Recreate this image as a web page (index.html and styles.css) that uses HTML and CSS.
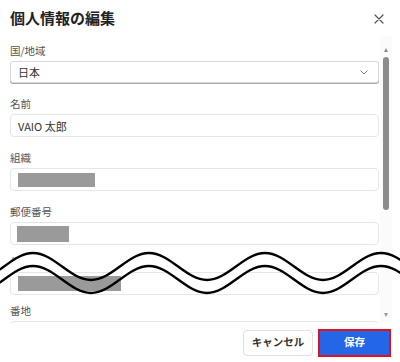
FILE: index.html
```html
<!DOCTYPE html>
<html lang="ja">
<head>
<meta charset="utf-8">
<title>個人情報の編集</title>
<link rel="stylesheet" href="styles.css">
</head>
<body>
<div class="dialog">
  <header class="head">
    <h1 class="title">個人情報の編集</h1>
    <button class="close" aria-label="閉じる">
      <svg width="10" height="10" viewBox="0 0 10 10"><path d="M1 1L9 9M9 1L1 9" stroke="#555" stroke-width="1.2" fill="none" stroke-linecap="round"/></svg>
    </button>
  </header>
  <div class="scroll">
    <div class="content">
      <div class="field">
        <div class="label">国/地域</div>
        <div class="box select"><span class="value">日本</span>
          <svg class="chev" width="8" height="5" viewBox="0 0 8 5"><path d="M0.5 0.5L4 4L7.5 0.5" stroke="#777" stroke-width="1" fill="none"/></svg>
        </div>
      </div>
      <div class="field">
        <div class="label">名前</div>
        <div class="box"><span class="value">VAIO 太郎</span></div>
      </div>
      <div class="field">
        <div class="label">組織</div>
        <div class="box"><span class="redact redact-org"></span></div>
      </div>
      <div class="field field-tight">
        <div class="label">郵便番号</div>
        <div class="box"><span class="redact redact-zip"></span></div>
      </div>
      <div class="field field-tighter">
        <div class="label">住所</div>
        <div class="box"><span class="redact redact-addr"></span></div>
      </div>
      <div class="field">
        <div class="label">番地</div>
        <div class="box"></div>
      </div>
    </div>
    <div class="scrollbar">
      <span class="arrow up"></span>
      <span class="thumb"></span>
      <span class="arrow down"></span>
    </div>
  </div>
  <footer class="foot">
    <button class="btn cancel">キャンセル</button>
    <button class="btn save">保存</button>
  </footer>
  <svg class="wave wave-fill" width="400" height="60" viewBox="0 240 400 60">
    <path d="M -83 259.5 C -61.92 259.5 -46.08 286.5 -25 286.5 S 11.92 259.5 33 259.5 S 70.08 286.5 91 286.5 S 127.92 259.5 149 259.5 S 186.08 286.5 207 286.5 S 243.92 259.5 265 259.5 S 302.08 286.5 323 286.5 S 359.92 259.5 381 259.5 S 418.08 286.5 439 286.5 S 475.92 259.5 497 259.5" fill="none" stroke="#fff" stroke-width="12.5"/>
  </svg>
  <svg class="wave wave-line" width="400" height="60" viewBox="0 240 400 60">
    <path d="M -83 253 C -61.92 253 -46.08 280 -25 280 S 11.92 253 33 253 S 70.08 280 91 280 S 127.92 253 149 253 S 186.08 280 207 280 S 243.92 253 265 253 S 302.08 280 323 280 S 359.92 253 381 253 S 418.08 280 439 280 S 475.92 253 497 253" fill="none" stroke="#000" stroke-width="2.4"/>
    <path d="M -83 266 C -61.92 266 -46.08 293 -25 293 S 11.92 266 33 266 S 70.08 293 91 293 S 127.92 266 149 266 S 186.08 293 207 293 S 243.92 266 265 266 S 302.08 293 323 293 S 359.92 266 381 266 S 418.08 293 439 293 S 475.92 266 497 266" fill="none" stroke="#000" stroke-width="2.4"/>
  </svg>
</div>
</body>
</html>
```
FILE: styles.css
```css
* { box-sizing: border-box; }
html, body { margin: 0; padding: 0; background: #fff; }
body {
  font-family: "Noto Sans CJK JP", "Noto Sans", sans-serif;
  color: #333;
}
.dialog {
  position: relative;
  width: 400px;
  height: 362px;
  display: flex;
  flex-direction: column;
  overflow: hidden;
}
.head {
  height: 36px;
  flex: none;
  display: flex;
  align-items: center;
  justify-content: space-between;
  padding: 0 16px 0 10px;
}
.title {
  margin: 0;
  font-size: 15px;
  font-weight: 700;
  color: #222;
  line-height: 20px;
}
.close {
  border: 0;
  background: none;
  padding: 0;
  margin-top: 2px;
  width: 10px;
  height: 10px;
  display: flex;
}
.scroll {
  flex: none;
  height: 287px;
  display: flex;
  overflow: hidden;
  padding: 0 8px 0 10px;
}
.content {
  flex: 1;
  padding-top: 8px;
  margin-right: 1px;
}
.field { margin-bottom: 14px; }
.field-tight { margin-bottom: 10px; }
.field-tighter { margin-bottom: 9px; }
.label {
  font-size: 10.5px;
  line-height: 14px;
  color: #555;
  margin-bottom: 3px;
}
.box {
  height: 23px;
  border: 1px solid #e6e6e6;
  border-radius: 4px;
  display: flex;
  align-items: center;
  padding-left: 6px;
  background: #fff;
}
.select {
  height: 22px;
  border-color: #d8d8d8;
  border-radius: 3px;
  box-shadow: 0 1px 0 #a8a8a8;
  margin-bottom: 1px;
  justify-content: space-between;
  padding-right: 10px;
}
.value {
  font-size: 11px;
  color: #333;
  padding-left: 1px;
}
.chev { display: block; }
.redact {
  display: block;
  background: #9a9a9a;
}
.redact-org { width: 77px; height: 14px; margin-left: 1px; }
.redact-zip { width: 52px; height: 16px; }
.redact-addr { width: 103px; height: 15px; margin-left: 1px; position: relative; z-index: 2; }
.scrollbar {
  width: 12px;
  flex: none;
  display: flex;
  flex-direction: column;
  align-items: center;
  padding-top: 12px;
  padding-bottom: 6px;
  background: #fbfbfb;
}
.arrow {
  width: 0;
  height: 0;
  border-left: 2.5px solid transparent;
  border-right: 2.5px solid transparent;
}
.arrow.up { border-bottom: 4px solid #8a8a8a; }
.arrow.down { border-top: 4px solid #9a9a9a; margin-top: auto; }
.thumb {
  margin-top: 5px;
  width: 6px;
  height: 153px;
  border-radius: 3px;
  background: #8c8c8c;
}
.foot {
  flex: 1;
  display: flex;
  justify-content: flex-end;
  align-items: center;
  gap: 5px;
  padding-right: 9px;
  background: #fff;
  position: relative;
  z-index: 4;
}
.btn {
  font-family: inherit;
  font-size: 10.5px;
  font-weight: 700;
  line-height: 1;
  padding: 0;
  cursor: pointer;
}
.cancel {
  width: 70px;
  height: 26px;
  border: 1px solid #e0e0e0;
  border-radius: 4px;
  background: #fff;
  color: #333;
}
.save {
  width: 73px;
  height: 28px;
  border: 2px solid #e3101c;
  background: #2366e8;
  color: #fff;
}
.wave {
  position: absolute;
  left: 0;
  top: 240px;
  pointer-events: none;
}
.wave-fill { z-index: 1; }
.wave-line { z-index: 3; }
```
